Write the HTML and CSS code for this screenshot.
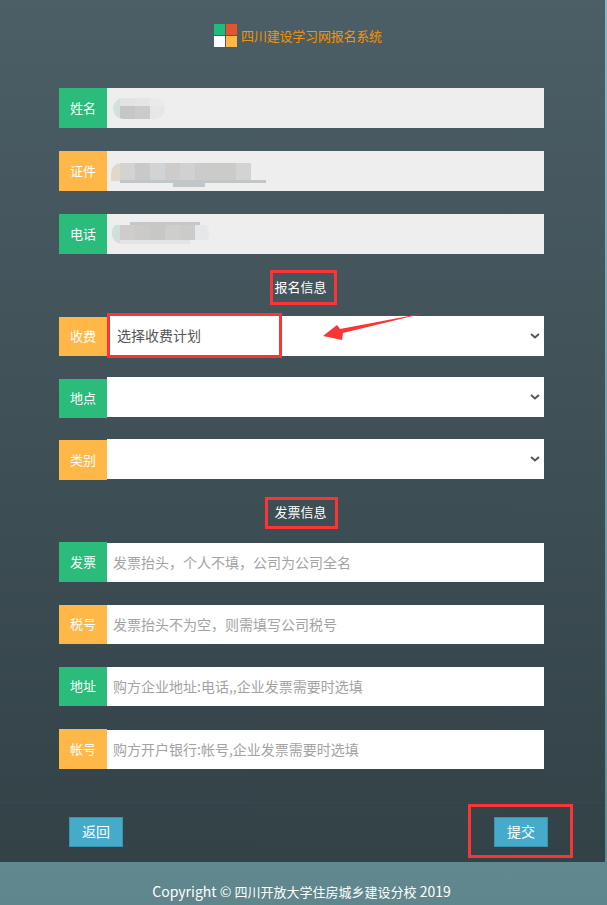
FILE: index.html
```html
<!DOCTYPE html>
<html lang="zh-CN">
<head>
  <meta charset="UTF-8" />
  <meta name="viewport" content="width=device-width, initial-scale=1.0"/>
  <title>四川建设学习网报名系统</title>
  <link rel="stylesheet" href="styles.css">
</head>
<body>
  <div class="page">
    <header class="brand">
      <div class="brand-logo">
        <span class="logo-green"></span>
        <span class="logo-red"></span>
        <span class="logo-white"></span>
        <span class="logo-yellow"></span>
      </div>
      <span class="brand-name">四川建设学习网报名系统</span>
    </header>

    <form class="signup-form">
      <!-- Personal details (values masked) -->
      <div class="row row-gap">
        <label class="tag tag-green">姓名</label>
        <div class="readonly"><span class="mask mask-name"></span></div>
      </div>
      <div class="row row-gap">
        <label class="tag tag-yellow">证件</label>
        <div class="readonly"><span class="mask mask-id"></span></div>
      </div>
      <div class="row">
        <label class="tag tag-green">电话</label>
        <div class="readonly"><span class="mask mask-phone"></span></div>
      </div>

      <h2 class="section-title">报名信息</h2>

      <div class="row gap-21">
        <label class="tag tag-yellow tag-short-down">收费</label>
        <div class="select-wrap">
          <select><option>选择收费计划</option></select>
          <svg class="chevron" width="10" height="6" viewBox="0 0 10 6"><polyline points="1,1 5,4.5 9,1" fill="none" stroke="#555" stroke-width="2"/></svg>
        </div>
      </div>
      <div class="row gap-22">
        <label class="tag tag-green tag-low">地点</label>
        <div class="select-wrap">
          <select><option></option></select>
          <svg class="chevron" width="10" height="6" viewBox="0 0 10 6"><polyline points="1,1 5,4.5 9,1" fill="none" stroke="#555" stroke-width="2"/></svg>
        </div>
      </div>
      <div class="row">
        <label class="tag tag-yellow tag-down">类别</label>
        <div class="select-wrap">
          <select><option></option></select>
          <svg class="chevron" width="10" height="6" viewBox="0 0 10 6"><polyline points="1,1 5,4.5 9,1" fill="none" stroke="#555" stroke-width="2"/></svg>
        </div>
      </div>

      <h2 class="section-title section-title-wide">发票信息</h2>

      <div class="row gap-23">
        <label class="tag tag-green">发票</label>
        <input class="input-low" type="text" placeholder="发票抬头，个人不填，公司为公司全名"/>
      </div>
      <div class="row row-short gap-23">
        <label class="tag tag-yellow">税号</label>
        <input type="text" placeholder="发票抬头不为空，则需填写公司税号"/>
      </div>
      <div class="row row-short gap-23">
        <label class="tag tag-green">地址</label>
        <input type="text" placeholder="购方企业地址:电话,,企业发票需要时选填"/>
      </div>
      <div class="row">
        <label class="tag tag-yellow">帐号</label>
        <input class="input-low" type="text" placeholder="购方开户银行:帐号,企业发票需要时选填"/>
      </div>

      <div class="form-actions">
        <button type="button">返回</button>
        <button type="button">提交</button>
      </div>
    </form>

    <!-- Red markup drawn over the form -->
    <div class="mark mark-title-1"></div>
    <div class="mark mark-select"></div>
    <div class="mark mark-title-2"></div>
    <div class="mark mark-submit"></div>
    <svg class="mark-arrow" width="110" height="32" viewBox="0 0 110 32">
      <polygon points="3,24 17,13 20,17 105,1 23,21 22,28" fill="#fb3535"/>
    </svg>
  </div>

  <footer class="copyright">Copyright © <span class="copyright-cn">四川开放大学住房城乡建设分校</span> 2019</footer>
</body>
</html>
```

FILE: styles.css
```css
html, body {
  margin: 0;
  height: 905px;
  overflow: hidden;
}
body {
  font-family: "Noto Sans CJK SC", "Liberation Sans", sans-serif;
  background: linear-gradient(#8fb8c6, #5f868c);
  color: #fff;
}
.page {
  position: relative;
  width: 605px;
  background: linear-gradient(#4c5e66, #324247);
}
.brand {
  display: flex;
  justify-content: center;
  align-items: center;
  height: 23px;
  padding: 24px 9px 41px 0;
}
.brand-logo {
  display: grid;
  grid-template-columns: 11px 11px;
  grid-template-rows: 11px 11px;
  gap: 1px;
  margin-right: 4px;
}
.logo-green { background: #22bb7c; }
.logo-red { background: #e0552d; }
.logo-white { background: #fff; }
.logo-yellow { background: #ffb848; }
.brand-name {
  font-size: 13px;
  letter-spacing: -0.2px;
  color: #f59300;
}
.signup-form {
  padding: 0 61px 0 59px;
}
.row {
  display: flex;
  align-items: flex-start;
  height: 40px;
}
.row-short { height: 39px; }
.row-gap { margin-bottom: 23px; }
.gap-21 { margin-bottom: 21px; }
.gap-22 { margin-bottom: 22px; }
.gap-23 { margin-bottom: 23px; }
.tag {
  flex: 0 0 48px;
  height: 100%;
  display: flex;
  justify-content: center;
  align-items: center;
  padding-bottom: 2px;
  font-size: 13px;
  box-sizing: border-box;
}
.tag-green { background: #2bbb7b; }
.tag-yellow { background: #ffb848; }
.tag-short-down { margin-top: 1px; height: 39px; }
.tag-low { margin-top: 2px; height: 39px; }
.tag-down { margin-top: 1px; }
.readonly {
  flex: 1;
  height: 100%;
  display: flex;
  align-items: center;
  background: #eee;
}
.mask {
  display: block;
}
.mask-name {
  width: 52px;
  height: 21px;
  margin-left: 6px;
  border-radius: 11px;
  background:
    linear-gradient(90deg, #d3e0dc 7px, transparent 7px),
    linear-gradient(90deg, #c6c6c6 22px, #cbcbcb 22px 37px, #e6e7e7 37px) 0 8px / 100% 13px no-repeat,
    linear-gradient(90deg, #e2e4e3 22px, #e5e5e4 22px 37px, #eaeaea 37px);
}
.mask-id {
  width: 155px;
  height: 24px;
  margin: 8px 0 0 4px;
  border-radius: 10px 3px 3px 3px;
  background:
    linear-gradient(90deg, #e2d8c9 9px, transparent 9px) 0 0 / 100% 18px no-repeat,
    linear-gradient(#c1c6c8, #c1c6c8) 62px 20px / 32px 4px no-repeat,
    linear-gradient(#c1c6c8, #c1c6c8) 9px 17px / 146px 3px no-repeat,
    linear-gradient(90deg, #d4d2d2 24px, #c9c9c9 24px 39px, #d2d3d4 39px 54px, #cecccb 54px 69px, #cfd1d2 69px 84px, #cbcbca 84px 125px, #d3d3d2 125px 140px, #eee 140px) 0 0 / 100% 18px no-repeat;
}
.mask-phone {
  width: 97px;
  height: 22px;
  margin: -2px 0 0 5px;
  border-radius: 10px;
  background:
    linear-gradient(90deg, #cfe0da 8px, transparent 8px) 0 3px / 100% 19px no-repeat,
    linear-gradient(#c4c8ca, #c4c8ca) 18px 0 / 70px 3px no-repeat,
    linear-gradient(#e4e4e6, #e4e4e6) 8px 18px / 70px 4px no-repeat,
    linear-gradient(90deg, #cfcdcc 23px, #cbcac9 23px 38px, #c7c7c6 38px 53px, #cfcecd 53px 68px, #cbcbca 68px 83px, #e6e7ea 83px) 0 3px / 100% 15px no-repeat;
}
.section-title {
  margin: 0;
  padding: 23px 0 19px;
  font-size: 13px;
  font-weight: normal;
  line-height: 20px;
  text-align: center;
  transform: translateX(-1px);
}
.section-title-wide {
  padding-bottom: 20px;
}
.select-wrap {
  position: relative;
  flex: 1;
  height: 100%;
}
.select-wrap select {
  display: block;
  width: 100%;
  height: 100%;
  padding: 0 10px 2px;
  border: none;
  border-radius: 0;
  appearance: none;
  background: #fff;
  color: #555;
  font: 14px "Noto Sans CJK SC", sans-serif;
}
.chevron {
  position: absolute;
  top: 17px;
  right: 4px;
}
.row input {
  flex: 1;
  min-width: 0;
  height: 100%;
  padding: 0 6px 2px;
  border: none;
  border-radius: 0;
  box-sizing: border-box;
  background: #fff;
  font: 14px "Noto Sans CJK SC", sans-serif;
}
.row input.input-low {
  margin-top: 1px;
  height: 39px;
}
.row input::placeholder {
  color: #a3a3a3;
  opacity: 1;
}
.form-actions {
  display: flex;
  justify-content: space-between;
  margin: 33px -61px 0 -59px;
  padding: 14px 57px 15px 69px;
  border-top: 1px solid #3a454c;
}
.form-actions button {
  width: 54px;
  height: 30px;
  padding: 0 0 2px;
  background: #46abcb;
  border: 1px solid #3b94ae;
  border-radius: 0;
  color: #fff;
  font: 14px "Noto Sans CJK SC", sans-serif;
}
.mark {
  position: absolute;
  box-sizing: border-box;
  border: 3px solid #fb3535;
}
.mark-title-1 { left: 270px; top: 270px; width: 67px; height: 35px; }
.mark-select { left: 107px; top: 313px; width: 175px; height: 45px; }
.mark-title-2 { left: 265px; top: 497px; width: 73px; height: 32px; }
.mark-submit { left: 468px; top: 804px; width: 105px; height: 54px; }
.mark-arrow {
  position: absolute;
  left: 320px;
  top: 312px;
}
.copyright {
  width: 603px;
  padding-top: 20px;
  text-align: center;
  font-size: 14px;
  line-height: 18px;
}
.copyright-cn {
  font-size: 13px;
}
```
